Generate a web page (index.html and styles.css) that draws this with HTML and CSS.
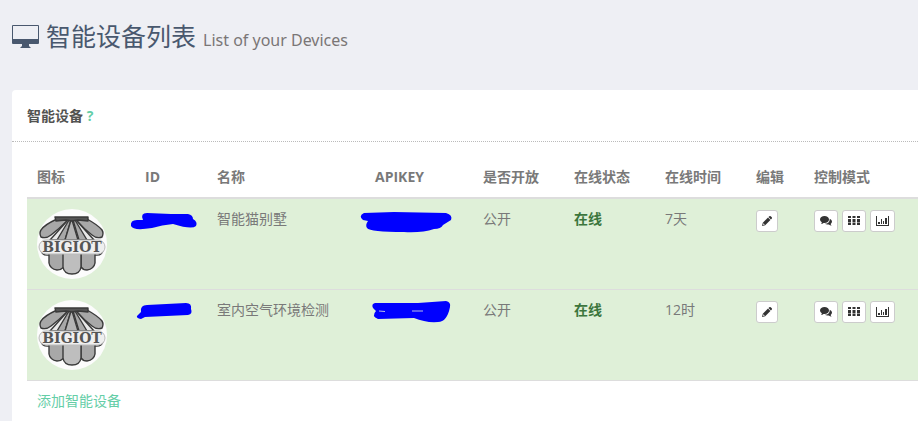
FILE: index.html
```html
<!DOCTYPE html>
<html lang="zh-CN">
<head>
<meta charset="utf-8">
<title>智能设备列表</title>
<link rel="stylesheet" href="styles.css">
</head>
<body>
<svg class="defs" aria-hidden="true">
  <defs>
    <symbol id="shell" viewBox="0 0 70 70">
      <circle cx="35" cy="35" r="35" fill="#fcfcfc"/>
      <path d="M18 11 3 27 6 31H64L67 27 52 11Z" fill="#ececec"/>
      <g stroke="#3a3a3a" stroke-width="1.400" stroke-linejoin="round">
        <path d="M20 10Q7 16 4 21 2 24 4 28 9 30 14 26 22 20 31 11Z" fill="#a8a8a8"/>
        <path d="M50 10Q61 16 65 21 67 24 65 28 60 30 55 26 47 20 39 11Z" fill="#a8a8a8"/>
        <path d="M31 11 13 31H23L33 11Z" fill="#e8e8e8"/>
        <path d="M39 11 57 31H48L37 11Z" fill="#e8e8e8"/>
        <path d="M32 11 20 31H28L34 11Z" fill="#a8a8a8"/>
        <path d="M36 11 42 31H50L38 11Z" fill="#a8a8a8"/>
        <path d="M34 11 28 31H41L35 11Z" fill="#b4b4b4"/>
        <path d="M12 44V54Q13 60 20 61 24 61 27 58V44Z" fill="#a8a8a8"/>
        <path d="M58 44V54Q57 60 50 61 46 61 44 58V44Z" fill="#a8a8a8"/>
        <path d="M26 44V58Q27 65 35 65 43 65 44 58V44Z" fill="#bebebe"/>
        <path d="M4 42Q6 47 12 46M66 42Q64 47 58 46" fill="none"/>
        <path d="M18 8H51V12L41 11 35 12 29 11 19 12Z" fill="#555"/>
      </g>
      <rect x="2" y="31" width="66" height="14" rx="7" fill="#efefef" stroke="#bbb"/>
      <text x="35" y="43" text-anchor="middle" class="shell-text">BIGIOT</text>
    </symbol>
    <symbol id="pencil" viewBox="0 0 12 12">
      <path d="M8.300 1.200Q9 .6 9.700 1.200L10.800 2.300Q11.300 3 10.700 3.700L9.900 4.500 7.500 2.100ZM7 2.600 9.400 5 4.200 10.200 1 11 1.800 7.800ZM2.500 8.300 2.100 9.500 2.600 10 3.800 9.600Z"/>
    </symbol>
    <symbol id="chat" viewBox="0 0 12 12">
      <path d="M4.500 1C7 1 9 2.500 9 4.500S7 8 4.500 8L3.500 7.900Q2.500 8.800 1 9 1.800 8.200 1.800 7.300 0 6.300 0 4.500C0 2.500 2 1 4.500 1Z"/>
      <path d="M9.800 3.700Q12 4.600 12 6.500 12 8 10.700 8.900 10.800 9.900 11.700 10.700 9.800 10.500 8.800 9.500 6.500 9.900 4.800 8.800 9.800 8.600 9.800 3.700Z"/>
    </symbol>
    <symbol id="grid" viewBox="0 0 12 12">
      <path d="M0 1H3V3H0ZM4.500 1H7.500V3H4.500ZM9 1H12V3H9ZM0 4H3V7H0ZM4.500 4H7.500V7H4.500ZM9 4H12V7H9ZM0 7.500H3V10H0ZM4.500 7.500H7.500V10H4.500ZM9 7.500H12V10H9Z"/>
    </symbol>
    <symbol id="chart" viewBox="0 0 13 12">
      <path d="M0 1H1V10H13V11H0ZM2 7H4V9H2ZM5 4H6V9H5ZM7 6H8V9H7ZM9 3H11V9H9ZM12 1H13V10H12Z"/>
    </symbol>
  </defs>
</svg>

<header class="page-header">
  <h1>
    <svg class="monitor" viewBox="0 0 27 23" aria-hidden="true"><path fill-rule="evenodd" d="M1 0H26Q27 0 27 1V18Q27 19 26 19H17V21L19 23H8L10 21V19H1Q0 19 0 18V1Q0 0 1 0ZM1 1V14H26V1Z"/></svg>
    智能设备列表 <small>List of your Devices</small>
  </h1>
</header>

<main class="panel">
  <header class="panel-heading">智能设备 <a href="#help">?</a></header>
  <div class="panel-body">
    <table>
      <colgroup>
        <col class="col-icon"><col class="col-id"><col class="col-name"><col class="col-key"><col class="col-state"><col class="col-state"><col class="col-state"><col class="col-edit"><col>
      </colgroup>
      <thead>
        <tr><th>图标</th><th>ID</th><th>名称</th><th>APIKEY</th><th>是否开放</th><th>在线状态</th><th>在线时间</th><th>编辑</th><th>控制模式</th></tr>
      </thead>
      <tbody>
        <tr>
          <td><svg class="avatar" aria-label="BIGIOT"><use href="#shell"/></svg></td>
          <td><div class="mask"><svg class="ink" viewBox="0 0 92 24"><path d="M0 13Q-1 7 6 7H12Q9 0 16 0L40 1 57 1Q62 2 62 6 67 9 65 13 61 17 42 11 31 12 21 15 2 18 0 13Z"/></svg></div></td>
          <td>智能猫别墅</td>
          <td><div class="mask"><svg class="ink" viewBox="0 0 92 24"><path d="M3 0 33 -1 85 0Q92 2 90 7L82 12Q80 16 73 16 61 20 43 19 9 19 6 15 4 12 7 8L2 7Q-3 3 3 0Z"/></svg></div></td>
          <td>公开</td><td class="online">在线</td><td>7天</td>
          <td><button type="button" aria-label="编辑"><svg><use href="#pencil"/></svg></button></td>
          <td><div class="actions"><button type="button" class="wide" aria-label="对话"><svg><use href="#chat"/></svg></button><button type="button" class="wide" aria-label="按键"><svg><use href="#grid"/></svg></button><button type="button" class="wider" aria-label="图表"><svg><use href="#chart"/></svg></button></div></td>
        </tr>
        <tr>
          <td><svg class="avatar" aria-label="BIGIOT"><use href="#shell"/></svg></td>
          <td><div class="mask"><svg class="ink" viewBox="0 0 92 24"><path d="M6 12 10 8Q9 1 16 1L55 -1Q61 -1 60 5 62 10 57 11L14 13 10 15Q5 14 6 12Z"/></svg></div></td>
          <td>室内空气环境检测</td>
          <td><div class="mask"><svg class="ink" viewBox="0 0 92 24"><path d="M14 -1 57 -1 85 -3Q90 -2 89 3 86 18 77 18 65 19 53 14L17 15Q10 12 15 7L12 4Q10 0 14 -1Z"/><path class="gap" d="M18 7 24 7.500M51 7 62 7"/></svg></div></td>
          <td>公开</td><td class="online">在线</td><td>12时</td>
          <td><button type="button" aria-label="编辑"><svg><use href="#pencil"/></svg></button></td>
          <td><div class="actions"><button type="button" class="wide" aria-label="对话"><svg><use href="#chat"/></svg></button><button type="button" class="wide" aria-label="按键"><svg><use href="#grid"/></svg></button><button type="button" class="wider" aria-label="图表"><svg><use href="#chart"/></svg></button></div></td>
        </tr>
      </tbody>
      <tfoot>
        <tr><td colspan="9"><a href="#add">添加智能设备</a></td></tr>
      </tfoot>
    </table>
  </div>
</main>
</body>
</html>
```
FILE: styles.css
```css
* { box-sizing: border-box; }

body {
  margin: 0;
  padding-left: 12px;
  background: #eeeff4;
  color: #797979;
  font: 14px/20px "Open Sans", "Noto Sans CJK SC", sans-serif;
  overflow-x: hidden;
}

a { color: #65cea7; text-decoration: none; }

.defs { position: absolute; width: 0; height: 0; }

.page-header { padding: 18px 0 36px; }

h1 {
  display: flex;
  align-items: baseline;
  gap: 7px;
  margin: 0;
  color: #49586e;
  font-size: 25px;
  font-weight: 400;
  line-height: 36px;
}

h1 small {
  color: #7a7676;
  font-family: "Noto Sans", sans-serif;
  font-size: 16px;
  line-height: 20px;
}

.monitor { width: 27px; height: 23px; align-self: center; fill: #49586e; }

.panel {
  min-height: 331px;
  background: #fff;
  border-radius: 4px 0 0 0;
}

.panel-heading {
  padding: 15px;
  border-bottom: 1px dotted #bbb;
  color: #535351;
  font-size: 14px;
  font-weight: 700;
  line-height: 21px;
}

.panel-body { padding: 15px 0 0 15px; }

table {
  width: 100%;
  table-layout: fixed;
  border-collapse: collapse;
}

.col-icon, .col-key { width: 108px; }
.col-id { width: 72px; }
.col-name { width: 158px; }
.col-state { width: 91px; }
.col-edit { width: 58px; }

th, td {
  padding: 10px;
  text-align: left;
  vertical-align: top;
  white-space: nowrap;
}

th { border-bottom: 2px solid #ddd; }
td { border-top: 1px solid #ddd; }
tbody tr { background: #dff0d8; }

.avatar { display: block; width: 70px; height: 70px; }
.shell-text { font: 700 14px "DejaVu Serif", serif; fill: #555; }

.online { color: #3c763d; font-weight: 700; }

.mask { position: relative; height: 20px; }
.ink {
  position: absolute;
  top: 4px;
  left: -14px;
  width: 92px;
  height: 24px;
  overflow: visible;
  fill: #00f;
}
.gap { fill: none; stroke: #b9bfe2; }

button {
  display: flex;
  align-items: center;
  justify-content: center;
  width: 22px;
  height: 22px;
  margin: 1px 0 0;
  padding: 0;
  border: 1px solid #ccc;
  border-radius: 3px;
  background: #fff;
  color: #333;
}

button svg { width: 12px; height: 12px; fill: currentColor; }
.wide { width: 24px; }
.wider { width: 25px; }
.wider svg { width: 13px; }
.actions { display: flex; gap: 4px; }
```
